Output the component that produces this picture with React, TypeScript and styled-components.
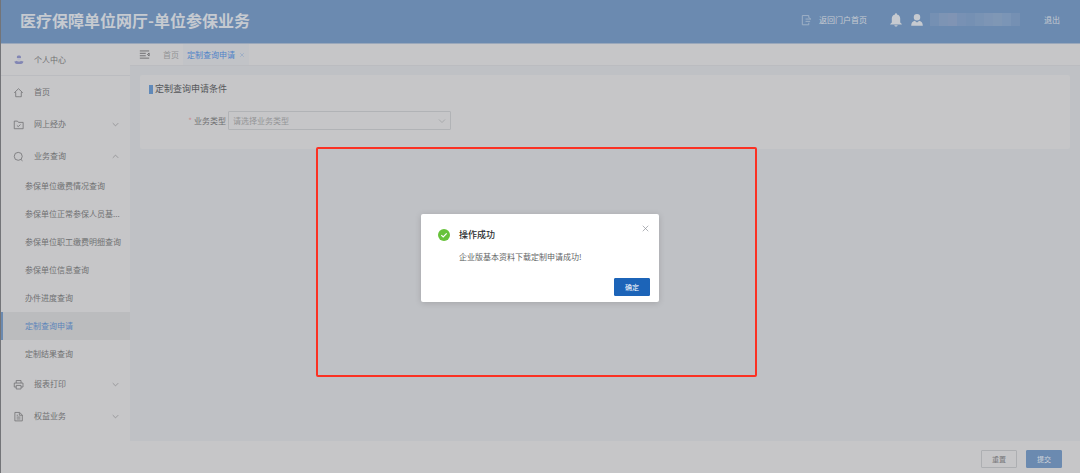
import React from "react";
import styled, { createGlobalStyle } from "styled-components";

const color = {
  header: "#6b8ab0",
  headerText: "#c6cad0",
  panel: "#c6c6c8",
  canvas: "#bfc1c5",
  line: "#bbbcc0",
  text: "#6f7072",
  muted: "#929395",
  blue: "#5b84ba",
};

const GlobalStyle = createGlobalStyle`
  *, *::before, *::after { box-sizing: border-box; }
  body {
    margin: 0;
    background: ${color.panel};
    color: ${color.text};
    font: 8px/12px "Noto Sans CJK SC", sans-serif;
  }
  button, select { font: inherit; color: inherit; margin: 0; }
  button { cursor: pointer; }
  a { color: inherit; text-decoration: none; }
  svg { display: block; flex: none; }
`;

const Page = styled.div`
  position: relative;
  display: flex;
  flex-direction: column;
  min-height: 100vh;

  &::before {
    content: "";
    position: absolute;
    top: 0;
    bottom: 0;
    left: 0;
    width: 1px;
    background: #737478;
  }
`;

const Header = styled.header`
  display: flex;
  align-items: center;
  height: 44px;
  padding: 0 20px 4px;
  background: ${color.header};
  border-bottom: 1px solid #9aa8bb;
  color: ${color.headerText};
`;

const Brand = styled.h1`
  flex: 1;
  margin: 0;
  font-size: 16px;
  line-height: 24px;
  font-weight: 700;
`;

const PortalLink = styled.a`
  display: flex;
  align-items: center;
  gap: 7px;
  margin-right: 23px;
`;

const IconButton = styled.button`
  padding: 0;
  border: 0;
  background: none;
  margin-right: 9px;
`;

const Mosaic = styled.div`
  display: flex;
  width: 90px;
  height: 13px;
  margin: 0 24px 0 7px;
`;

const Tile = styled.span<{ $tone: string }>`
  flex: 1;
  background: ${(p) => p.$tone};
`;

const Body = styled.div`
  flex: 1;
  display: flex;
`;

const Sidebar = styled.nav`
  width: 130px;
  flex: none;
  background: ${color.panel};
`;

const MenuItem = styled.a<{ $divided?: boolean }>`
  display: flex;
  align-items: center;
  gap: 10px;
  height: 32px;
  padding: 0 10px 0 13px;
  border-bottom: ${(p) => (p.$divided ? `1px solid ${color.line}` : "0")};
`;

const MenuLabel = styled.span`
  flex: 1;
`;

const SubItem = styled.a<{ $active?: boolean }>`
  display: block;
  padding: 0 8px 0 ${(p) => (p.$active ? 22 : 25)}px;
  line-height: 28px;
  white-space: nowrap;
  color: ${(p) => (p.$active ? color.blue : color.text)};
  background: ${(p) => (p.$active ? "#bbbcbe" : "transparent")};
  border-left: ${(p) => (p.$active ? `3px solid ${color.header}` : "0")};
`;

const Main = styled.main`
  flex: 1;
  min-width: 0;
  display: flex;
  flex-direction: column;
`;

const TabBar = styled.div`
  display: flex;
  align-items: center;
  height: 22px;
  padding-left: 9px;
  border-bottom: 1px solid ${color.line};
`;

const Tab = styled.a<{ $active?: boolean }>`
  display: flex;
  align-items: center;
  gap: 4px;
  height: 21px;
  padding: 0 4px;
  color: ${(p) => (p.$active ? "#4f82c8" : color.muted)};
  background: ${(p) => (p.$active ? "#c1c3c7" : "transparent")};
`;

const Content = styled.div`
  flex: 1;
  padding: 9px 10px;
  background: ${color.canvas};
`;

const Card = styled.section`
  padding: 7px 9px 19px;
  background: ${color.panel};
  border-radius: 2px;
`;

const CardTitle = styled.h2`
  display: flex;
  align-items: center;
  gap: 2px;
  margin: 0 0 15px;
  font-size: 9px;
  line-height: 14px;
  font-weight: 400;
  color: #55575a;

  &::before {
    content: "";
    width: 4px;
    height: 9px;
    background: #6089b9;
  }
`;

const Field = styled.div`
  display: flex;
  align-items: center;
`;

const FieldLabel = styled.label`
  width: 77px;
  text-align: right;
`;

const Required = styled.span`
  margin-right: 2px;
  color: #c98b8e;
`;

const SelectWrap = styled.div`
  display: grid;
  align-items: center;
  width: 223px;
  margin-left: 2px;

  & > * { grid-area: 1 / 1; }
  & > svg { justify-self: end; margin-right: 4px; pointer-events: none; }
`;

const Select = styled.select`
  appearance: none;
  width: 100%;
  height: 19px;
  padding: 0 4px;
  border: 1px solid #b1b3b6;
  border-radius: 1px;
  background: transparent;
  color: #949597;
`;

const Footer = styled.footer`
  display: flex;
  justify-content: flex-end;
  align-items: center;
  gap: 9px;
  height: 32px;
  padding: 4px 18px 0 0;
`;

const Button = styled.button<{ $kind: "plain" | "soft" | "primary" }>`
  width: 36px;
  height: 18px;
  padding: 0;
  font-size: 7px;
  line-height: 12px;
  border-radius: 1px;
  border: 1px solid
    ${(p) => ({ plain: "#adafb2", soft: "#6b8ab0", primary: "#1c64b8" })[p.$kind]};
  background: ${(p) =>
    ({ plain: "transparent", soft: "#6b8ab0", primary: "#1c64b8" })[p.$kind]};
  color: ${(p) => ({ plain: "#77787a", soft: "#d0d4da", primary: "#ffffff" })[p.$kind]};
`;

const Highlight = styled.div`
  position: absolute;
  top: 147px;
  left: calc(50% - 224px);
  width: 441px;
  height: 230px;
  border: 2px solid #fb3123;
  border-radius: 2px;
  pointer-events: none;
`;

const Dialog = styled.div`
  position: absolute;
  top: 214px;
  left: 50%;
  transform: translateX(-50%);
  display: grid;
  grid-template-columns: 12px 1fr auto;
  column-gap: 9px;
  width: 238px;
  padding: 13px 9px 6px 17px;
  background: #fff;
  border-radius: 2px;
  box-shadow: 0 1px 6px rgba(0, 0, 0, 0.15);
`;

const DialogTitle = styled.h2`
  margin: 0;
  font-size: 9px;
  line-height: 16px;
  font-weight: 500;
  color: #2b2d30;
`;

const DialogText = styled.p`
  grid-column: 2 / -1;
  margin: 8px 0 15px;
  line-height: 12px;
  color: #626466;
`;

const DialogActions = styled.div`
  grid-column: 1 / -1;
  display: flex;
  justify-content: flex-end;
`;

const CloseButton = styled.button`
  display: flex;
  align-items: flex-start;
  align-self: start;
  height: 9px;
  margin-top: -3px;
  padding: 0;
  border: 0;
  background: none;
  color: #909399;
`;

const IconSlot = styled.span`
  display: flex;
  align-items: center;
`;

type GlyphName =
  | "person" | "home" | "folder" | "search" | "print" | "doc"
  | "collapse" | "exit" | "down" | "up" | "close";

const glyphs: Record<GlyphName, React.ReactNode> = {
  person: (
    <g stroke="none">
      <path d="M4.6 3.4C4.6 1.2 9.4 1.2 9.4 3.4V4.6H4.6Z" fill="#8286b4" />
      <path d="M4.8 4.6h4.4c0 4-4.4 4-4.4 0Z" fill="#b9bac8" />
      <path d="M1.800 8.700c1.200 0 2.200-.3 2.800-.8 1.200 1.400 3.600 1.400 4.800 0 .6.5 1.600.8 2.800.8 0 2.300-1.200 3.200-2.800 3.200H4.600C3 11.900 1.800 11 1.800 8.700Z" fill="#8286b4" />
    </g>
  ),
  home: <path d="M3.200 11.500V6.500H1.800L6.500 2l4.700 4.500H9.800v5H8M3.200 11.500H8" />,
  folder: <path d="M1.500 2.500h3.800l1.200 1.500H12v7.500H1.500ZM4.600 7.600l1.600 1.500 2.700-2.600" />,
  search: <path d="M6.200 1.600a4.700 4.700 0 1 0 0 9.400 4.700 4.700 0 0 0 0-9.400ZM9.300 10l2 1.700" />,
  print: <path d="M3.800 4.800V1.800h5.700v3M3.800 9.500H1.500V4.800h10.300v4.700H9.500M3.800 7.600h5.700v4.200H3.800Z" />,
  doc: <path d="M2.200 1.700h5.600l3.200 3v7H2.200ZM7.500 2v3H11M4.300 5h1.700M4.300 7.200h4.500M4.300 9.400h4.500" />,
  collapse: <path d="M1 2.300h11M1 5.100h7M1 8h7M1 10.800h11M12 4.800 10 6.500l2 1.700Z" />,
  exit: <path d="M9.500 4V1.700H2.500v10h7V9.500M6 5.500h5.800M9.500 3.800l2.200 1.700M6 8h5" />,
  down: <path d="M2.500 4.500l4 4 4-4" />,
  up: <path d="M2.500 8.500l4-4 4 4" />,
  close: <path d="M2.500 2.500l8 8M10.500 2.500l-8 8" />,
};

function Glyph({ name, size = 11, tone = "currentColor" }: { name: GlyphName; size?: number; tone?: string }) {
  return (
    <svg width={size} height={size} viewBox="0 0 13 13" fill="none" stroke={tone} strokeWidth="1" aria-hidden="true">
      {glyphs[name]}
    </svg>
  );
}

const queries = [
  "参保单位缴费情况查询",
  "参保单位正常参保人员基...",
  "参保单位职工缴费明细查询",
  "参保单位信息查询",
  "办件进度查询",
  "定制查询申请",
  "定制结果查询",
];

const tiles = ["#7590b3", "#7d94b4", "#8094b4", "#7891b4", "#7590b3", "#7993b4", "#7d95b5", "#7f97b5", "#7b95b6", "#7590b3"];

function Entry({ icon, label, arrow, divided }: { icon: GlyphName; label: string; arrow?: "down" | "up"; divided?: boolean }) {
  return (
    <MenuItem href="#" $divided={divided}>
      <Glyph name={icon} tone="#757678" />
      <MenuLabel>{label}</MenuLabel>
      {arrow && <Glyph name={arrow} size={9} tone="#858688" />}
    </MenuItem>
  );
}

export default function App() {
  return (
    <>
      <GlobalStyle />
      <Page>
        <Header>
          <Brand>医疗保障单位网厅-单位参保业务</Brand>
          <PortalLink href="#">
            <Glyph name="exit" size={12} tone="#a2b3c8" />
            返回门户首页
          </PortalLink>
          <IconButton aria-label="消息">
            <svg width="12" height="14" viewBox="0 0 12 14" fill={color.headerText}>
              <path d="M6 0.300c.7 0 1 .5 1 1.100 2.200.5 3.200 2.200 3.200 4.200v3.800l1.600 1.500v.7H.2v-.7l1.600-1.500V5.600c0-2 1-3.700 3.200-4.200 0-.6.3-1.100 1-1.100ZM4.300 12.200h3.400c-.2 1.700-3.200 1.700-3.400 0Z" />
            </svg>
          </IconButton>
          <svg width="12" height="12" viewBox="0 0 12 12" fill={color.headerText} aria-hidden="true">
            <path d="M6 0a3.200 3.200 0 0 1 0 6.500A3.200 3.200 0 0 1 6 0ZM.2 11.700c0-2.600 1-4.500 3.500-5L6 8.600l2.300-1.900c2.500.5 3.500 2.400 3.500 5Z" />
          </svg>
          <Mosaic>
            {tiles.map((t, i) => (
              <Tile key={i} $tone={t} />
            ))}
          </Mosaic>
          <a href="#">退出</a>
        </Header>
        <Body>
          <Sidebar>
            <Entry icon="person" label="个人中心" divided />
            <Entry icon="home" label="首页" />
            <Entry icon="folder" label="网上经办" arrow="down" />
            <Entry icon="search" label="业务查询" arrow="up" />
            {queries.map((q) => (
              <SubItem key={q} href="#" $active={q === "定制查询申请"}>
                {q}
              </SubItem>
            ))}
            <Entry icon="print" label="报表打印" arrow="down" />
            <Entry icon="doc" label="权益业务" arrow="down" />
          </Sidebar>
          <Main>
            <TabBar>
              <IconButton aria-label="收起菜单">
                <Glyph name="collapse" tone="#626365" />
              </IconButton>
              <Tab href="#">首页</Tab>
              <Tab href="#" $active>
                定制查询申请
                <Glyph name="close" size={6} tone="#7d9bc4" />
              </Tab>
            </TabBar>
            <Content>
              <Card>
                <CardTitle>定制查询申请条件</CardTitle>
                <Field>
                  <FieldLabel htmlFor="biz-type">
                    <Required>*</Required>业务类型
                  </FieldLabel>
                  <SelectWrap>
                    <Select id="biz-type" defaultValue="">
                      <option value="">请选择业务类型</option>
                    </Select>
                    <Glyph name="down" size={10} tone="#a0a2a5" />
                  </SelectWrap>
                </Field>
              </Card>
            </Content>
            <Footer>
              <Button $kind="plain">重置</Button>
              <Button $kind="soft">提交</Button>
            </Footer>
          </Main>
        </Body>
        <Highlight />
        <Dialog role="dialog" aria-labelledby="dialog-title">
          <IconSlot>
            <svg width="12" height="12" viewBox="0 0 12 12" aria-hidden="true">
              <circle cx="6" cy="6" r="6" fill="#67c23a" />
              <path d="M3.300 6.100l1.900 1.900 3.500-3.700" fill="none" stroke="#fff" strokeWidth="1.200" />
            </svg>
          </IconSlot>
          <DialogTitle id="dialog-title">操作成功</DialogTitle>
          <CloseButton aria-label="关闭">
            <Glyph name="close" size={9} />
          </CloseButton>
          <DialogText>企业版基本资料下载定制申请成功!</DialogText>
          <DialogActions>
            <Button $kind="primary">确定</Button>
          </DialogActions>
        </Dialog>
      </Page>
    </>
  );
}
